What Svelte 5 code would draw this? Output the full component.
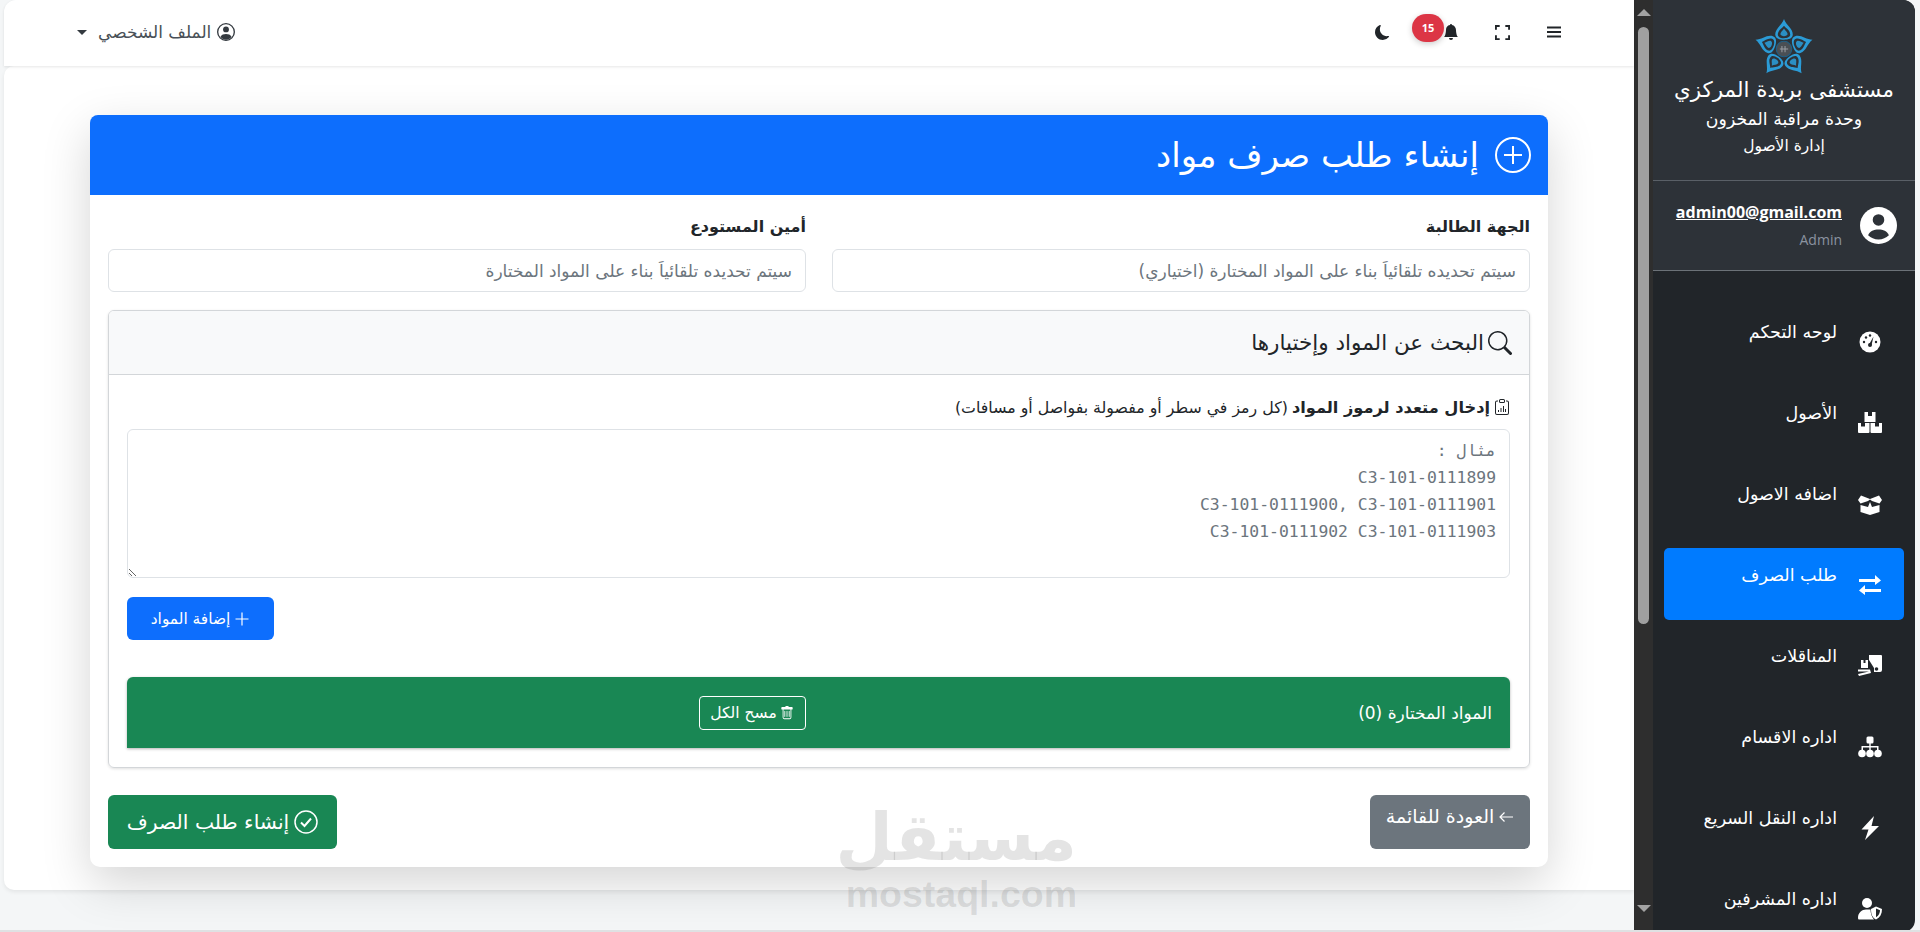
<script>
  const nav = [
    { label: 'لوحه التحكم', icon: 'gauge' },
    { label: 'الأصول', icon: 'boxes' },
    { label: 'اضافه الاصول', icon: 'open' },
    { label: 'طلب الصرف', icon: 'swap', active: true },
    { label: 'المناقلات', icon: 'dolly' },
    { label: 'اداره الاقسام', icon: 'tree' },
    { label: 'اداره النقل السريع', icon: 'bolt' },
    { label: 'اداره المشرفين', icon: 'shield' }
  ];
  const sample = 'مثال :\nC3-101-0111899\nC3-101-0111900, C3-101-0111901\nC3-101-0111902 C3-101-0111903';
  const petals = [0, 72, 144, 216, 288];
</script>

<div class="app" dir="rtl">
  <aside class="sidebar">
    <div class="brand">
      <svg class="logo" viewBox="-30 -30 60 56" aria-hidden="true">
        {#each petals as a}
          <g transform="rotate({a})">
            <path d="M0 -29C-2 -23 -8.500 -20 -8.500 -14C-8.500 -10 -4 -9 0 -9C4 -9 8.500 -10 8.500 -14C8.500 -20 2 -23 0 -29Z" fill="#2b9bd6" />
            <path d="M0 -22.500C-2 -20 -6 -18 -6 -14C-6 -11.500 -3 -10.500 0 -10.500C3 -10.500 6 -11.500 6 -14C6 -18 2 -20 0 -22.500Z" fill="#2d3238" />
            <path d="M0 -20C-1 -18 -3.500 -16.500 -3.500 -14.500C-3.500 -13 -1.500 -12.500 0 -12.500C1.500 -12.500 3.500 -13 3.500 -14.500C3.500 -16.500 1 -18 0 -20Z" fill="#2b8fc4" />
          </g>
        {/each}
        <circle r="7.500" fill="#4a4f54" stroke="#1f5f85" stroke-width="1" />
        <path d="M-4 0H4M-2 -3V3M1 -3V3" stroke="#9a9ea3" stroke-width="1" />
      </svg>
      <div class="b1">مستشفى بريدة المركزي</div>
      <div class="b2">وحدة مراقبة المخزون</div>
      <div class="b3">إدارة الأصول</div>
    </div>
    <div class="user">
      <svg class="avatar" viewBox="0 0 16 16" aria-hidden="true">
        <circle cx="8" cy="8" r="8" fill="#fff" />
        <circle cx="8" cy="5.600" r="2.500" fill="#2d3238" />
        <path d="M3.500 12.200C4.300 10.400 6 9.700 8 9.700s3.700.7 4.500 2.500C11.300 13.400 9.800 14 8 14s-3.300-.6-4.500-1.800Z" fill="#2d3238" />
      </svg>
      <div class="who">
        <a href="#top" class="mail" dir="ltr">admin00@gmail.com</a>
        <span class="role">Admin</span>
      </div>
    </div>
    <nav class="nav">
      {#each nav as item}
        <a href="#top" class="item" class:active={item.active}>
          <svg class="nav-ico" viewBox="0 0 24 24" fill="#fff" aria-hidden="true">
            {#if item.icon === 'gauge'}
              <circle cx="12" cy="12" r="10.500" />
              <path d="M11 14.500L15.500 6.500L13.500 15.200Z" fill="#212529" />
              <circle cx="12" cy="15" r="2" fill="#212529" />
              <circle cx="6" cy="12" r="1.200" fill="#212529" /><circle cx="8" cy="7.500" r="1.200" fill="#212529" /><circle cx="12" cy="5.500" r="1.200" fill="#212529" /><circle cx="18" cy="12" r="1.200" fill="#212529" />
            {:else if item.icon === 'boxes'}
              <path d="M6.500 1H10V5H14V1H17.500V11H6.500Z" />
              <path d="M0 12H3V15.500H7V12H11.500V21Q11.500 22 10.500 22H1Q0 22 0 21Z" />
              <path d="M12.500 12H17V15.500H21V12H24V21Q24 22 23 22H13.500Q12.500 22 12.500 21Z" />
            {:else if item.icon === 'open'}
              <path d="M0 8L3 3.500L12 7L21 3.500L24 8L21.500 11.500L14 9L12 7.500L10 9L2.500 11.500Z" />
              <path d="M2.500 13L10 15L12 10L14 15L21.500 13V20L12 23L2.500 20Z" />
            {:else if item.icon === 'swap'}
              <path d="M1 6H17V2L23 7.500L17 12V9H1Z" />
              <path d="M23 16H7V12L1 17.500L7 22V19H23Z" />
            {:else if item.icon === 'dolly'}
              <path d="M11 1H23Q24 1 24 2V16Q24 18 22 18H16L16 14L11 6Z" />
              <circle cx="18.500" cy="15" r="1.800" fill="#212529" />
              <path d="M3 6H5.500V9H7.500V6H10V14H3Z" />
              <path d="M0 15.500L12 15.500L13 19L1 22L0 20L11 17.500L0 17.500Z" />
            {:else if item.icon === 'tree'}
              <rect x="8.500" y="1.500" width="7" height="7" rx="1.500" />
              <path d="M11.300 8H12.700V11H20.500V15H19V12.500H12.700V15H11.300V12.500H5V15H3.500V11H11.300Z" />
              <circle cx="4" cy="18.500" r="3.800" /><circle cx="12" cy="18.500" r="3.800" /><circle cx="20" cy="18.500" r="3.800" />
            {:else if item.icon === 'bolt'}
              <path d="M16 0L3.500 13.500H10.500L7 24L21 10H13.500Z" />
            {:else}
              <circle cx="9" cy="6" r="5" />
              <path d="M0 21C0 15.500 4 12.500 8 12.500H12.500C12.500 16 13.500 19.500 16 22.500H1Q0 22.500 0 21Z" />
              <path d="M18 9.500L24 12C24 17 22 20.500 18 22.500C14 20.500 13 17 13 12Z" />
              <path d="M18 11.500V20.300C21 18.500 22 15.500 22 13.200Z" fill="#212529" />
            {/if}
          </svg>
          <span>{item.label}</span>
        </a>
      {/each}
    </nav>
  </aside>

  <div class="scrollbar" aria-hidden="true">
    <span class="arrow up"></span>
    <span class="thumb"></span>
    <span class="arrow down"></span>
  </div>

  <main class="main">
    <header class="topbar">
      <div class="tools">
        <svg class="tool" viewBox="0 0 16 16" aria-hidden="true"><path d="M1 3.500H15M1 8H15M1 12.500H15" stroke="#212529" stroke-width="1.800" fill="none" /></svg>
        <svg class="tool full" viewBox="0 0 16 16" aria-hidden="true"><path d="M1 5V1H5M11 1H15V5M15 11V15H11M5 15H1V11" stroke="#212529" stroke-width="2" fill="none" /></svg>
        <span class="bell-wrap">
          <svg class="tool" viewBox="0 0 16 16" fill="#212529" aria-hidden="true"><path d="M8 16a2 2 0 0 0 2-2H6a2 2 0 0 0 2 2zm.995-14.901a1 1 0 1 0-1.990 0A5.002 5.002 0 0 0 3 6c0 1.098-.5 6-2 7h14c-1.500-1-2-5.902-2-7 0-2.420-1.720-4.440-4.005-4.901z" /></svg>
          <span class="badge">15</span>
        </span>
        <svg class="tool moon" viewBox="0 0 16 16" fill="#212529" aria-hidden="true"><path d="M6 .278a.768.768 0 0 1 .08.858 7.208 7.208 0 0 0-.878 3.460c0 4.021 3.278 7.277 7.318 7.277.527 0 1.040-.055 1.533-.160a.787.787 0 0 1 .810.316.733.733 0 0 1-.031.893A8.349 8.349 0 0 1 8.344 16C3.734 16 0 12.286 0 7.710 0 4.266 2.114 1.312 5.124.060A.752.752 0 0 1 6 .278z" /></svg>
      </div>
      <div class="profile">
        <svg class="prof-ico" viewBox="0 0 16 16" aria-hidden="true">
          <circle cx="8" cy="8" r="7.400" fill="none" stroke="#343a40" stroke-width="1.200" />
          <circle cx="8" cy="5.700" r="2.600" fill="#343a40" />
          <path d="M3 12.500C4 10.300 6 9.800 8 9.800s4 .5 5 2.700C11.700 14 10 14.800 8 14.800s-3.700-.8-5-2.300Z" fill="#343a40" />
        </svg>
        <span>الملف الشخصي</span>
        <i class="caret"></i>
      </div>
    </header>

    <section class="panel">
      <div class="card">
        <div class="card-head">
          <svg class="head-ico" viewBox="0 0 36 36" aria-hidden="true">
            <circle cx="18" cy="18" r="17" fill="none" stroke="#fff" stroke-width="2" />
            <path d="M18 9V27M9 18H27" stroke="#fff" stroke-width="2" />
          </svg>
          <h1>إنشاء طلب صرف مواد</h1>
        </div>
        <div class="card-body">
          <div class="row">
            <label class="field">
              <span>الجهة الطالبة</span>
              <input readonly placeholder="سيتم تحديده تلقائياً بناء على المواد المختارة (اختياري)" />
            </label>
            <label class="field">
              <span>أمين المستودع</span>
              <input readonly placeholder="سيتم تحديده تلقائياً بناء على المواد المختارة" />
            </label>
          </div>

          <div class="search">
            <div class="search-head">
              <svg class="search-ico" viewBox="0 0 16 16" fill="#212529" aria-hidden="true"><path d="M11.742 10.344a6.500 6.500 0 1 0-1.397 1.398h-.001c.03.04.062.078.098.115l3.850 3.850a1 1 0 0 0 1.415-1.414l-3.850-3.850a1.007 1.007 0 0 0-.115-.1zM12 6.500a5.500 5.500 0 1 1-11 0 5.500 5.500 0 0 1 11 0z" /></svg>
              <h2>البحث عن المواد وإختيارها</h2>
            </div>
            <div class="search-body">
              <div class="multi">
                <svg class="clip" viewBox="0 0 16 16" fill="#212529" aria-hidden="true">
                  <path d="M4 1.500H3a2 2 0 0 0-2 2V14a2 2 0 0 0 2 2h10a2 2 0 0 0 2-2V3.500a2 2 0 0 0-2-2h-1v1h1a1 1 0 0 1 1 1V14a1 1 0 0 1-1 1H3a1 1 0 0 1-1-1V3.500a1 1 0 0 1 1-1h1v-1z" />
                  <path d="M9.500 1a.5.5 0 0 1 .5.5v1a.5.5 0 0 1-.5.5h-3a.5.5 0 0 1-.5-.5v-1a.5.5 0 0 1 .5-.5h3zm-3-1A1.500 1.500 0 0 0 5 1.500v1A1.500 1.500 0 0 0 6.500 4h3A1.500 1.500 0 0 0 11 2.500v-1A1.500 1.500 0 0 0 9.500 0h-3z" />
                  <path d="M4 11h1v2H4zM6.500 9h1v4h-1zM9 7h1v6H9zM11 10h1v3h-1z" />
                </svg>
                <strong>إدخال متعدد لرموز المواد</strong>
                <small>(كل رمز في سطر أو مفصولة بفواصل أو مسافات)</small>
              </div>
              <textarea readonly placeholder={sample}></textarea>
              <button class="btn add">
                <svg class="btn-ico" viewBox="0 0 16 16" aria-hidden="true"><path d="M8 1.500V14.500M1.500 8H14.500" stroke="#fff" stroke-width="1.200" /></svg>
                إضافة المواد
              </button>
              <div class="selected">
                <div class="sel-title">المواد المختارة (0)</div>
                <div class="sel-action">
                  <button class="clear">
                    <svg class="trash" viewBox="0 0 16 16" fill="#fff" aria-hidden="true">
                      <path d="M5.500 5.500A.5.5 0 0 1 6 6v6a.5.5 0 0 1-1 0V6a.5.5 0 0 1 .5-.5zm2.500 0a.5.5 0 0 1 .5.5v6a.5.5 0 0 1-1 0V6a.5.5 0 0 1 .5-.5zm3 .5a.5.5 0 0 0-1 0v6a.5.5 0 0 0 1 0V6z" />
                      <path d="M14.500 3a1 1 0 0 1-1 1H13v9a2 2 0 0 1-2 2H5a2 2 0 0 1-2-2V4h-.5a1 1 0 0 1-1-1V2a1 1 0 0 1 1-1H6a1 1 0 0 1 1-1h2a1 1 0 0 1 1 1h3.500a1 1 0 0 1 1 1v1zM4.118 4 4 4.059V13a1 1 0 0 0 1 1h6a1 1 0 0 0 1-1V4.059L11.882 4H4.118zM2.500 3V2h11v1h-11z" />
                    </svg>
                    مسح الكل
                  </button>
                </div>
              </div>
            </div>
          </div>

          <div class="actions">
            <button class="btn back">
              <svg class="btn-ico" viewBox="0 0 16 16" aria-hidden="true"><path d="M15 8H2M6.500 3.500L2 8L6.500 12.500" stroke="#fff" stroke-width="1.200" fill="none" /></svg>
              العودة للقائمة
            </button>
            <button class="btn create">
              <svg class="check" viewBox="0 0 24 24" aria-hidden="true">
                <circle cx="12" cy="12" r="11" fill="none" stroke="#fff" stroke-width="1.500" />
                <path d="M7 12.500L10.500 16L17 8.500" fill="none" stroke="#fff" stroke-width="2" />
              </svg>
              إنشاء طلب الصرف
            </button>
          </div>
        </div>
      </div>
    </section>
  </main>

  <div class="watermark" aria-hidden="true">
    <div class="wm-ar">مستقل</div>
    <div class="wm-en">mostaql.com</div>
  </div>
</div>

<style>
  :global(body) {
    margin: 0;
    background: #f4f6f7;
    font-family: "DejaVu Sans", "Noto Sans", sans-serif;
    color: #212529;
  }
  .app {
    position: relative;
    display: flex;
    width: 1920px;
    height: 932px;
    padding-right: 5px;
    box-sizing: border-box;
    overflow: hidden;
    border-bottom: 2px solid #dfe1e3;
  }
  .sidebar {
    width: 262px;
    height: 932px;
    flex: none;
    background: #212529;
    color: #fff;
    border-radius: 0 12px 12px 0;
    overflow: hidden;
  }
  .brand {
    height: 181px;
    box-sizing: border-box;
    background: #2d3238;
    border-bottom: 1px solid #5a6067;
    text-align: center;
    padding-top: 18px;
  }
  .logo { display: block; width: 62px; height: 58px; margin: 0 auto; }
  .b1 { font-size: 21.400px; line-height: 30px; margin-top: -1px; }
  .b2 { font-size: 17.300px; line-height: 24px; margin-top: 2px; }
  .b3 { font-size: 15.500px; line-height: 22px; margin-top: 4px; }
  .user {
    height: 90px;
    box-sizing: border-box;
    background: #2d3238;
    border-bottom: 1px solid #6c7278;
    display: flex;
    align-items: center;
    padding-right: 18px;
    gap: 18px;
  }
  .avatar { width: 37px; height: 37px; flex: none; }
  .who { display: flex; flex-direction: column; align-items: flex-start; gap: 9px; margin-top: -1px; }
  .mail { color: #fff; font-family: "Open Sans", sans-serif; font-weight: 700; font-size: 16px; text-decoration: underline; line-height: 20px; }
  .role { color: #8b93a0; font-family: "Open Sans", sans-serif; font-size: 14px; line-height: 18px; }
  .nav { display: flex; flex-direction: column; gap: 9px; padding: 34px 11px 0 11px; }
  .item {
    display: flex;
    height: 72px;
    flex: none;
    align-items: flex-start;
    color: #fff;
    text-decoration: none;
    border-radius: 5px;
    font-size: 17.500px;
    padding-right: 22px;
    gap: 21px;
    box-sizing: border-box;
  }
  .item span { margin-top: 15px; line-height: 24px; }
  .item.active { background: #007bff; }
  .nav-ico { width: 24px; height: 24px; margin-top: 25px; flex: none; }

  .scrollbar {
    width: 19px;
    flex: none;
    height: 932px;
    background: #2e2e2e;
    position: relative;
    box-sizing: border-box;
    display: flex;
    flex-direction: column;
    align-items: center;
    padding-top: 9px;
  }
  .arrow { width: 0; height: 0; border-left: 7px solid transparent; border-right: 7px solid transparent; flex: none; }
  .arrow.up { border-bottom: 7px solid #a3a3a3; }
  .arrow.down { border-top: 7px solid #a3a3a3; margin-top: 281px; }
  .thumb { width: 11px; height: 597px; margin-top: 11px; background: #a0a0a0; border-radius: 6px; flex: none; }

  .main { flex: 1; margin-left: 4px; min-width: 0; }
  .topbar {
    height: 66px;
    box-sizing: border-box;
    background: #fff;
    border-radius: 12px 0 0 0;
    box-shadow: 0 1px 3px rgba(0, 0, 0, .1);
    position: relative;
    display: flex;
    align-items: center;
    justify-content: space-between;
    padding: 0 72px 2px 73px;
  }
  .tools { display: flex; align-items: center; }
  .tool { width: 16px; height: 16px; display: block; }
  .full { margin-right: 36px; width: 15px; height: 15px; }
  .bell-wrap { position: relative; margin-right: 36px; display: block; }
  .moon { margin-right: 53px; width: 15px; height: 15px; }
  .badge {
    position: absolute;
    top: -10px;
    right: 15px;
    width: 32px;
    height: 28px;
    border-radius: 14px;
    background: #dc3545;
    color: #fff;
    font: 700 11px/28px "Open Sans", sans-serif;
    text-align: center;
    box-shadow: 0 2px 6px rgba(0, 0, 0, .2);
  }
  .profile { display: flex; align-items: center; color: #495057; font-size: 17px; gap: 6px; }
  .prof-ico { width: 18px; height: 18px; }
  .caret { width: 0; height: 0; border-left: 5px solid transparent; border-right: 5px solid transparent; border-top: 5px solid #343a40; margin-right: 5px; }

  .panel {
    height: 824px;
    box-sizing: border-box;
    background: #fff;
    border-radius: 10px 0 0 10px;
    padding: 49px 86px 0;
    box-shadow: 0 2px 4px rgba(0, 0, 0, .07);
  }
  .card {
    background: #fff;
    border-radius: 10px;
    box-shadow: 0 16px 48px rgba(0, 0, 0, .17);
    height: 752px;
  }
  .card-head {
    height: 80px;
    background: #0d6efd;
    border-radius: 8px 8px 0 0;
    color: #fff;
    display: flex;
    align-items: center;
    padding: 0 17px;
    gap: 16px;
  }
  .head-ico { width: 36px; height: 36px; flex: none; }
  h1 { margin: 0; font-size: 34px; font-weight: 400; }
  .card-body { padding: 20px 18px 18px; }
  .row { display: grid; grid-template-columns: 1fr 1fr; gap: 26px; }
  .field { display: block; }
  .field span { display: block; font-weight: 700; font-size: 16px; line-height: 24px; margin-bottom: 10px; }
  input {
    display: block;
    width: 100%;
    height: 43px;
    box-sizing: border-box;
    border: 1px solid #dee2e6;
    border-radius: 6px;
    background: #fff;
    padding: 0 13px;
    font: 400 17px "DejaVu Sans", sans-serif;
    outline: none;
  }
  input::placeholder { color: #6c757d; opacity: 1; }
  .search {
    margin-top: 18px;
    height: 458px;
    box-sizing: border-box;
    border: 1px solid #d3d6d9;
    border-radius: 6px;
    box-shadow: 0 1px 3px rgba(0, 0, 0, .12);
    overflow: hidden;
  }
  .search-head {
    height: 64px;
    box-sizing: border-box;
    background: #f8f9fa;
    border-bottom: 1px solid #d3d6d9;
    display: flex;
    align-items: center;
    padding: 0 17px 0 0;
    gap: 4px;
  }
  .search-ico { width: 24px; height: 24px; flex: none; }
  h2 { margin: 0; font-size: 21.500px; font-weight: 400; }
  .search-body { padding: 20px 19px 0 18px; }
  .multi { display: flex; align-items: center; gap: 4px; height: 24px; }
  .clip { width: 16px; height: 16px; flex: none; }
  .multi strong { font-size: 16.200px; white-space: nowrap; }
  .multi small { font-size: 15.800px; color: #212529; white-space: nowrap; }
  textarea {
    display: block;
    width: 100%;
    height: 149px;
    box-sizing: border-box;
    margin-top: 10px;
    border: 1px solid #dee2e6;
    border-radius: 6px;
    padding: 7px 13px;
    font: 16.400px/27px "DejaVu Sans Mono", monospace;
    outline: none;
    background: #fff;
  }
  textarea::placeholder { color: #6c757d; opacity: 1; }
  .btn {
    display: flex;
    align-items: center;
    gap: 4px;
    border: 0;
    color: #fff;
    font: 400 15px "DejaVu Sans", sans-serif;
    border-radius: 6px;
    box-sizing: border-box;
    cursor: pointer;
  }
  .btn-ico { width: 16px; height: 16px; flex: none; }
  .add { margin-top: 19px; margin-right: auto; width: 147px; height: 43px; background: #0d6efd; justify-content: center; padding: 0; font-size: 15.400px; }
  .selected {
    margin-top: 37px;
    height: 71px;
    background: #198754;
    border-radius: 6px 6px 0 0;
    box-shadow: 0 1px 3px rgba(0, 0, 0, .3);
    display: grid;
    grid-template-columns: 1fr 1fr;
    align-items: center;
    color: #fff;
    font-size: 17px;
  }
  .sel-title { padding-right: 18px; }
  .sel-action { display: flex; justify-content: flex-start; padding-right: 13px; }
  .clear {
    display: flex;
    align-items: center;
    justify-content: center;
    gap: 3px;
    width: 107px;
    height: 34px;
    background: transparent;
    border: 1px solid #fff;
    border-radius: 4px;
    color: #fff;
    font: 400 15.500px "DejaVu Sans", sans-serif;
    padding: 0;
  }
  .trash { width: 14px; height: 14px; }
  .actions { margin-top: 27px; display: flex; justify-content: space-between; }
  .back { width: 160px; height: 54px; background: #6c757d; align-items: flex-start; justify-content: center; padding: 10px 0 0; font-size: 19px; white-space: nowrap; }
  .back .btn-ico { margin-top: 4px; }
  .create { width: 229px; height: 54px; background: #198754; justify-content: center; font-size: 20.300px; white-space: nowrap; padding: 0; gap: 5px; }
  .check { width: 24px; height: 24px; }

  .watermark {
    position: absolute;
    left: 847px;
    top: 800px;
    width: 230px;
    text-align: center;
    pointer-events: none;
    color: rgba(90, 90, 90, .16);
    font-weight: 700;
  }
  .wm-ar { font: 700 66px/76px "DejaVu Sans", sans-serif; }
  .wm-en { font: 700 37.500px/36px "Liberation Sans", sans-serif; }
</style>
